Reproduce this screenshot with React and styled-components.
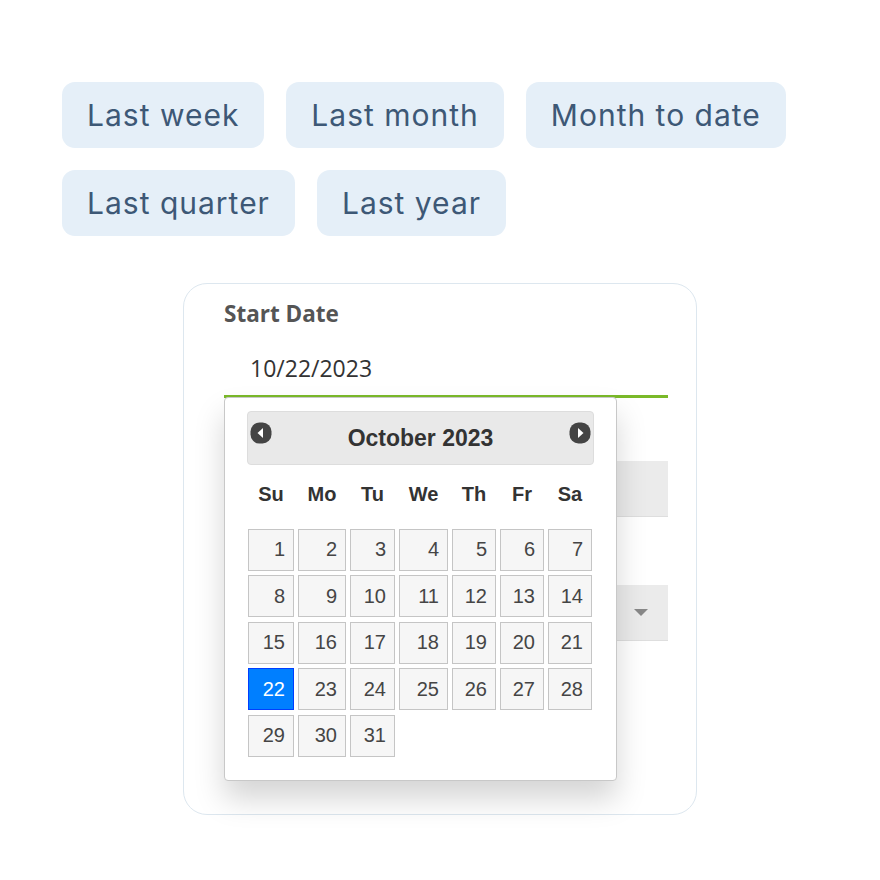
import React from 'react'
import styled, { createGlobalStyle } from 'styled-components';

const GlobalStyle = createGlobalStyle`
    html, body {
        margin: 0;
        padding: 0;
        background: #ffffff;
    }
    * {
        box-sizing: border-box;
    }
`;

const presets = [
    ['Last week', 'Last month', 'Month to date'],
    ['Last quarter', 'Last year'],
];

const weekDays = ['Su', 'Mo', 'Tu', 'We', 'Th', 'Fr', 'Sa'];

// October 2023 starts on a Sunday
const days = Array.from({ length: 31 }, (_, i) => i + 1);
const selectedDay = 22;

const ArrowIcon = ({ dir }) => (
    <svg width="22" height="22" viewBox="0 0 22 22">
        <rect x="0.5" y="0.5" width="21" height="21" rx="9" fill="#444" />
        {dir === 'left'
            ? <polygon points="13,6 13,16 7.5,11" fill="#fff" />
            : <polygon points="9,6 9,16 14.5,11" fill="#fff" />}
    </svg>
);

export default function App() {
    return (
        <Page>
            <GlobalStyle />
            <Presets>
                {presets.map((row, i) => (
                    <PresetRow key={i}>
                        {row.map(label => <Chip key={label}>{label}</Chip>)}
                    </PresetRow>
                ))}
            </Presets>

            <Card>
                <Label>Start Date</Label>
                <DateInput>10/22/2023</DateInput>
                <GrayField />
                <SelectField>
                    <Caret />
                </SelectField>

                <Picker>
                    <PickerHeader>
                        <NavButton side="left"><ArrowIcon dir="left" /></NavButton>
                        <Title>October 2023</Title>
                        <NavButton side="right"><ArrowIcon dir="right" /></NavButton>
                    </PickerHeader>
                    <Grid>
                        {weekDays.map(d => <WeekDay key={d}>{d}</WeekDay>)}
                        {days.map(d => (
                            <Day key={d} active={d === selectedDay}>{d}</Day>
                        ))}
                    </Grid>
                </Picker>
            </Card>
        </Page>
    );
}

const Page = styled.div`
    width: 880px;
    min-height: 880px;
    padding: 82px 0 0 62px;
`;

const Presets = styled.div`
    display: flex;
    flex-direction: column;
    gap: 22px;
`;

const PresetRow = styled.div`
    display: flex;
    gap: 22px;
`;

const Chip = styled.button`
    height: 66px;
    padding: 0 25px;
    border: none;
    border-radius: 13px;
    background: #e5eff8;
    color: #3d5876;
    font-family: "Inter", "Noto Sans", sans-serif;
    font-size: 30px;
    font-weight: 400;
    letter-spacing: 1px;
    cursor: pointer;
`;

const Card = styled.div`
    position: relative;
    width: 514px;
    height: 532px;
    margin: 47px 0 0 121px;
    padding: 15px 28px 0 40px;
    border: 1px solid #dde7ef;
    border-radius: 24px;
    background: #fff;
`;

const Label = styled.div`
    font-family: "Open Sans", sans-serif;
    font-weight: 700;
    font-size: 22.5px;
    line-height: 30px;
    color: #555;
`;

const DateInput = styled.div`
    height: 69px;
    padding: 12px 0 0 26px;
    border-bottom: 3px solid #7ab929;
    font-family: "Open Sans", sans-serif;
    font-size: 23px;
    line-height: 54px;
    color: #333;
`;

const GrayField = styled.div`
    height: 56px;
    margin-top: 63px;
    background: #ebebeb;
    border-bottom: 1px solid #dedede;
`;

const SelectField = styled.div`
    display: flex;
    align-items: center;
    justify-content: flex-end;
    height: 56px;
    margin-top: 68px;
    padding-right: 20px;
    background: #ebebeb;
    border-bottom: 1px solid #dedede;
`;

const Caret = styled.span`
    width: 0;
    height: 0;
    border-left: 7px solid transparent;
    border-right: 7px solid transparent;
    border-top: 7px solid #888;
`;

const Picker = styled.div`
    position: absolute;
    left: 40px;
    top: 113px;
    width: 393px;
    height: 384px;
    padding: 13px 22px 0 22px;
    background: #fff;
    border: 1px solid #c8c8c8;
    border-radius: 4px;
    box-shadow: 0 18px 30px rgba(0, 0, 0, 0.17);
`;

const PickerHeader = styled.div`
    position: relative;
    display: flex;
    align-items: center;
    justify-content: center;
    height: 54px;
    background: #e9e9e9;
    border: 1px solid #dddddd;
    border-radius: 4px;
`;

const NavButton = styled.span`
    position: absolute;
    top: 10px;
    ${p => p.side === 'left' ? 'left: 2px;' : 'right: 2px;'}
    display: flex;
`;

const Title = styled.div`
    font-family: "Liberation Sans", Arial, sans-serif;
    font-weight: 700;
    font-size: 23px;
    color: #333;
`;

const Grid = styled.div`
    display: grid;
    grid-template-columns: 46px 48px 45px 49px 44px 44px 44px;
    grid-template-rows: 59px;
    grid-auto-rows: 42px;
    column-gap: 4px;
    row-gap: 4.6px;
    padding-left: 1px;
`;

const WeekDay = styled.div`
    display: flex;
    align-items: center;
    justify-content: center;
    font-family: "Liberation Sans", Arial, sans-serif;
    font-weight: 700;
    font-size: 20px;
    color: #333;
`;

const Day = styled.div`
    display: flex;
    align-items: center;
    justify-content: flex-end;
    padding-right: 8px;
    background: ${p => p.active ? '#007fff' : '#f6f6f6'};
    border: 1px solid ${p => p.active ? '#003eff' : '#c5c5c5'};
    color: ${p => p.active ? '#ffffff' : '#454545'};
    font-family: "Liberation Sans", Arial, sans-serif;
    font-size: 20px;
`;
